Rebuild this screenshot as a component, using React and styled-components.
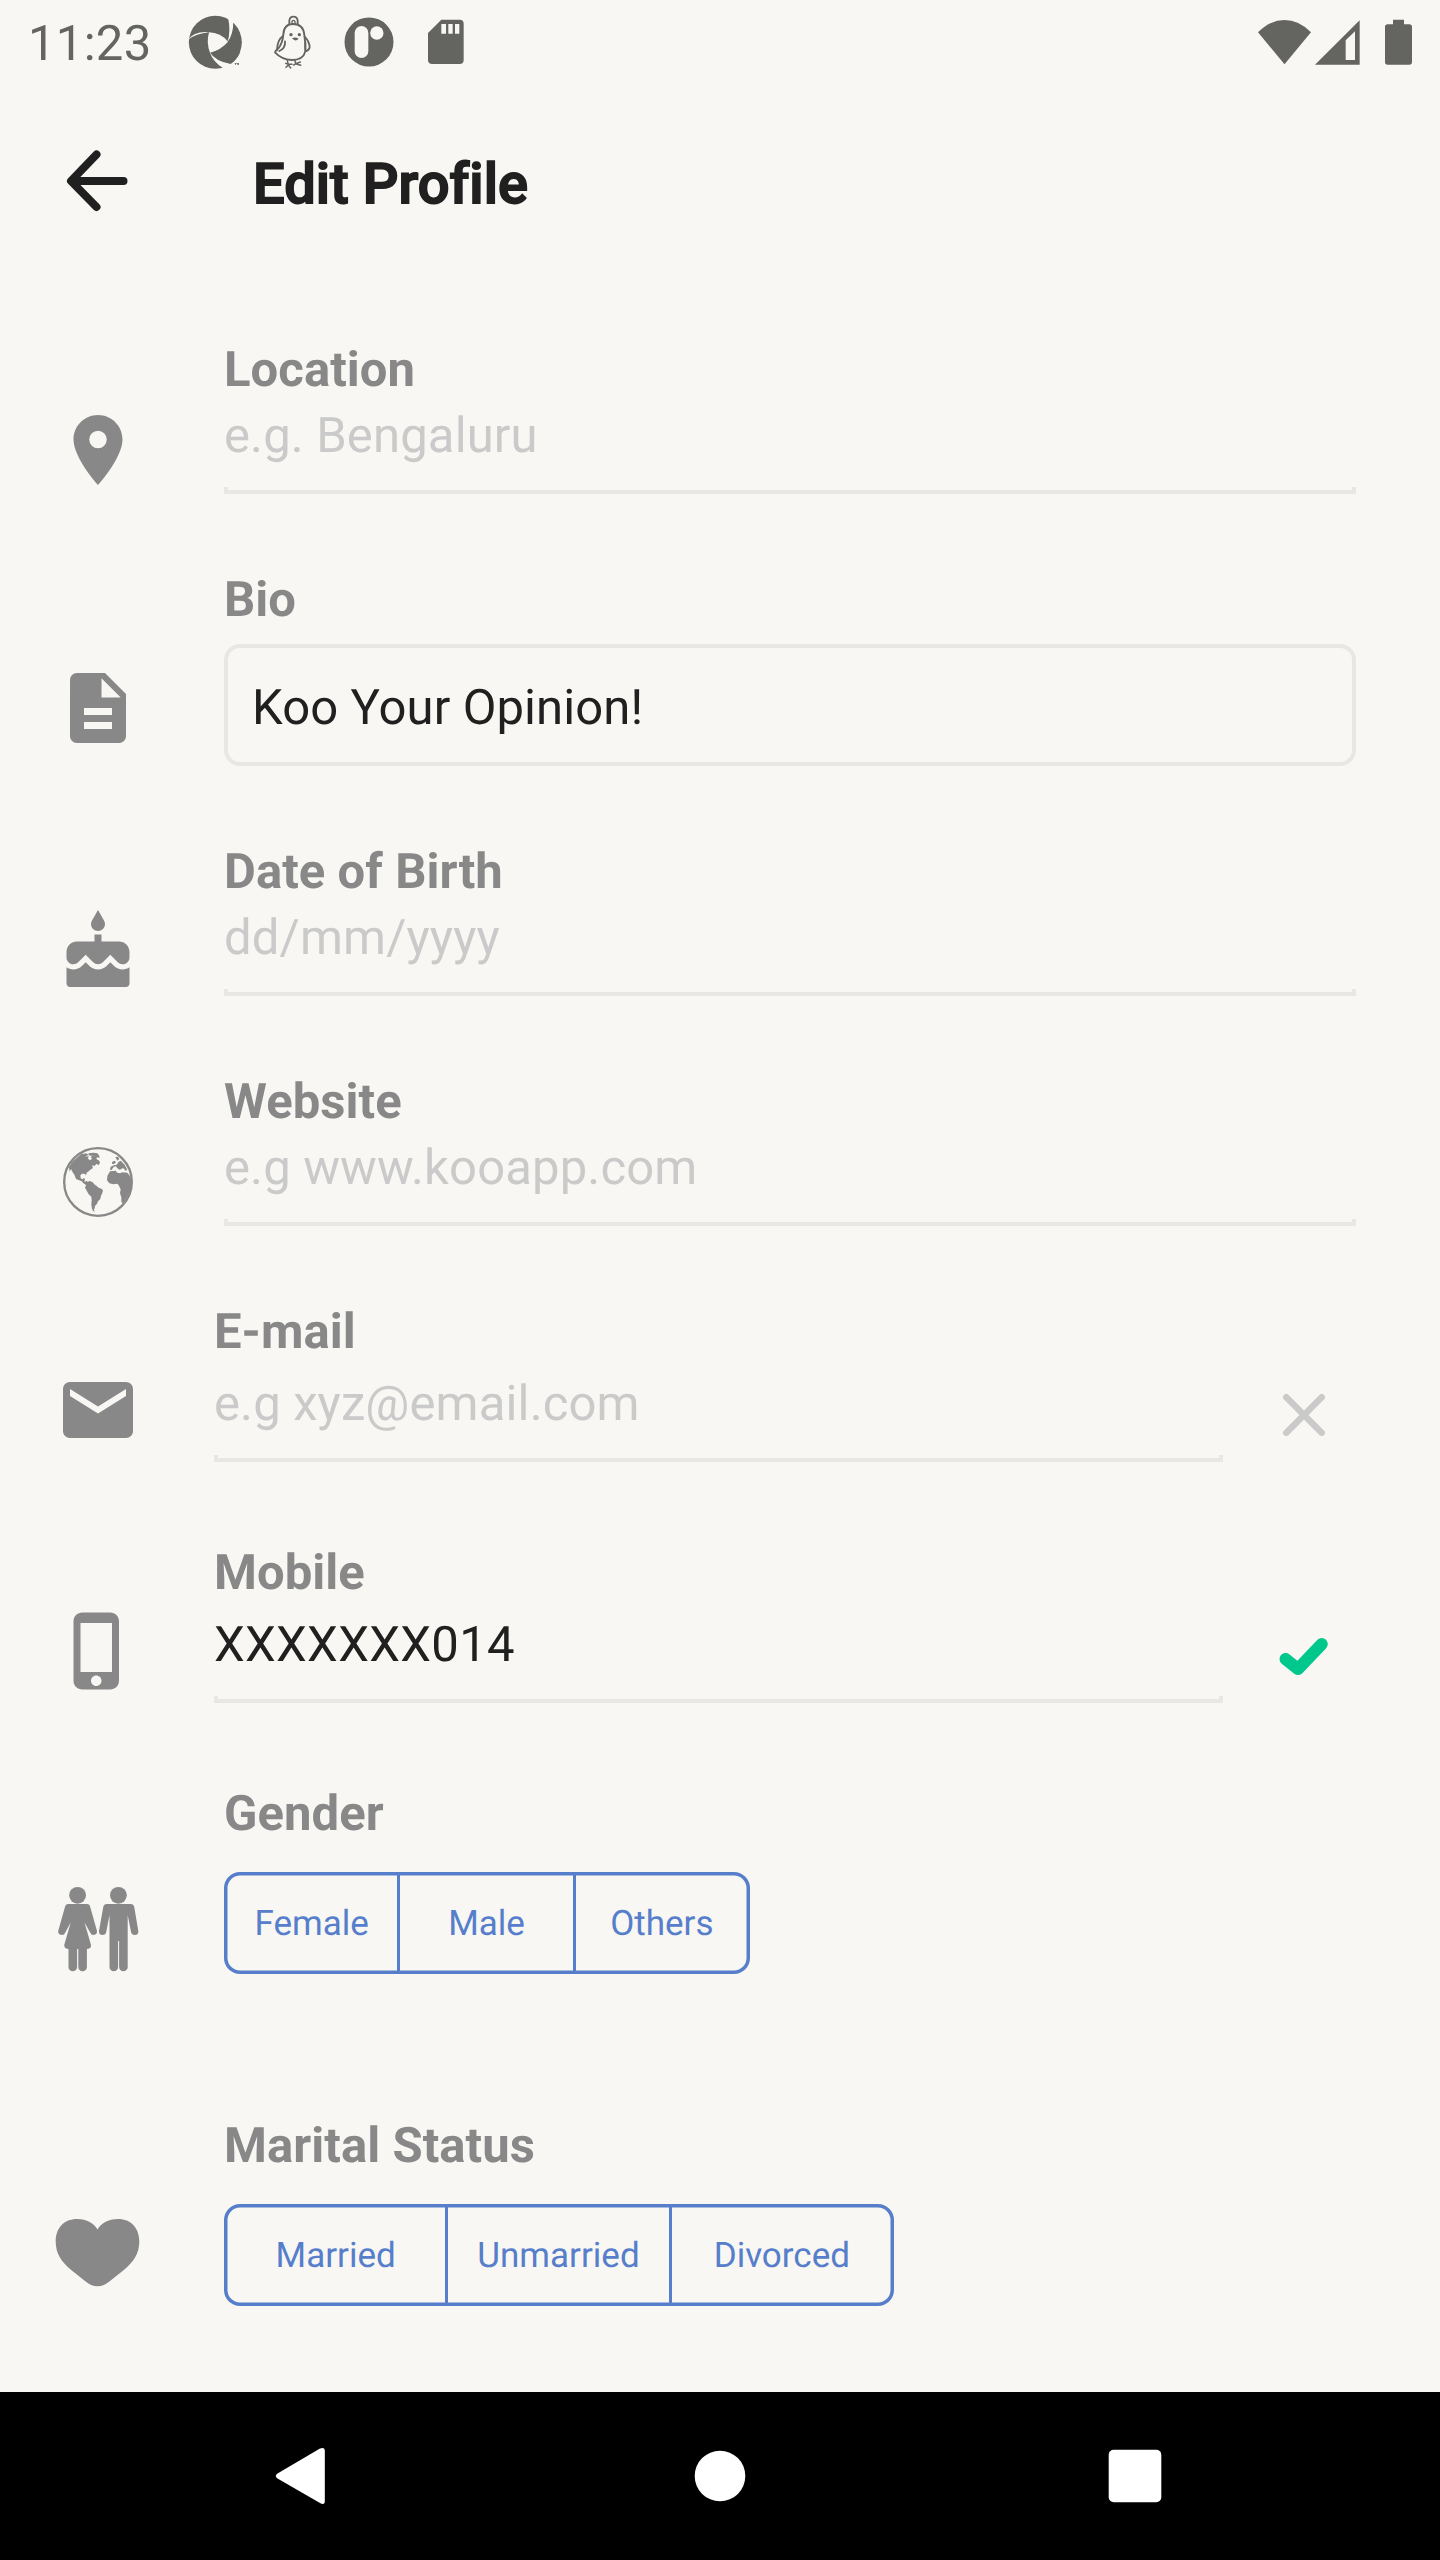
import React from "react";
import styled, { createGlobalStyle } from "styled-components";

const page = "#f8f7f3";
const ink = "#202020";
const muted = "#888888";
const hint = "#cacaca";
const rule = "#e7e8e3";
const blue = "#567ecb";
const statusInk = "#646461";

const GlobalStyle = createGlobalStyle`
  *, *::before, *::after { box-sizing: border-box; }
  html, body { margin: 0; padding: 0; background: ${page}; }
  body {
    font-family: Roboto, "Liberation Sans", sans-serif;
    color: ${ink};
    text-rendering: geometricPrecision;
  }
  svg { display: block; flex: none; overflow: visible; }
`;

const Screen = styled.div`
  width: 1440px;
  height: 2560px;
  display: flex;
  flex-direction: column;
  background: ${page};
  overflow: hidden;
`;

const StatusBar = styled.header`
  height: 84px;
  flex: none;
  display: flex;
  align-items: center;
  padding: 0 28px 0 28px;
  color: ${statusInk};
`;

const Clock = styled.span`
  width: 160px;
  font-size: 49px;
  line-height: 58px;
  letter-spacing: 0.3px;
  padding-top: 4px;
`;

const StatusIcon = styled.svg`
  width: ${(p) => p.$w}px;
  height: ${(p) => p.$h}px;
  margin-left: ${(p) => p.$gap || 0}px;
  fill: currentColor;
`;

const StatusEnd = styled.div`
  margin-left: auto;
  display: flex;
  align-items: center;
`;

const Toolbar = styled.div`
  height: 196px;
  flex: none;
  display: flex;
  align-items: center;
  padding-left: 56px;
`;

const BackButton = styled.button`
  width: 84px;
  height: 84px;
  padding: 0;
  border: 0;
  background: none;
  color: ${ink};
`;

const Title = styled.h1`
  margin: 4px 0 0 113px;
  font-size: 56px;
  line-height: 66px;
  font-weight: 500;
  letter-spacing: 0.05px;
  -webkit-text-stroke: 1.75px ${ink};
`;

const Form = styled.main`
  flex: 1;
  padding-top: 60px;
`;

const Row = styled.section`
  display: flex;
  align-items: flex-start;
  margin-bottom: ${(p) => p.$after}px;
`;

const IconSlot = styled.div`
  width: 84px;
  margin: ${(p) => p.$top}px ${(p) => (p.$tight ? 74 : 84)}px 0 56px;
  color: ${muted};
`;

const Field = styled.div`
  width: ${(p) => p.$width}px;
  display: flex;
  flex-direction: column;
`;

const Label = styled.label`
  padding-top: 1px;
  font-size: 49px;
  line-height: 58px;
  font-weight: 700;
  letter-spacing: 0.06px;
  color: ${muted};
`;

const Value = styled.div`
  margin-top: ${(p) => p.$gap}px;
  font-size: 49px;
  line-height: 58px;
  letter-spacing: ${(p) => (p.$filled ? 0.32 : 0.14)}px;
  color: ${(p) => (p.$filled ? ink : hint)};
`;

const Underline = styled.div`
  margin-top: 22px;
  height: 7px;
  border: 4px solid ${rule};
  border-top: 0;
`;

const BioBox = styled.div`
  margin-top: 15px;
  height: 122px;
  padding: 31px 24px 0;
  border: 4px solid ${rule};
  border-radius: 16px;
  font-size: 49px;
  line-height: 58px;
  letter-spacing: 0.1px;
`;

const Segments = styled.div`
  margin-top: 29px;
  width: ${(p) => p.$width}px;
  height: 102px;
  display: flex;
  border-radius: 16px;
  box-shadow: inset 0 0 0 3.5px ${blue};
`;

const Segment = styled.button`
  flex: 0 0 calc(100% / 3);
  padding: 2px 0 0;
  border: 0;
  background: none;
  color: ${blue};
  font: 400 35px/42px Roboto, "Liberation Sans", sans-serif;
  text-rendering: inherit;

  & + & {
    flex-basis: calc(100% / 3 + 2px);
    margin-left: -2px;
    padding-right: 2px;
    border-left: 3px solid ${blue};
  }
`;

const Mark = styled.div`
  width: 84px;
  margin: ${(p) => p.$top}px 0 0 39px;
`;

const NavBar = styled.nav`
  height: 168px;
  flex: none;
  display: flex;
  justify-content: center;
  align-items: center;
  gap: 331px;
  background: #000;
`;

const Svg24 = ({ children }) => (
  <svg width="84" height="84" viewBox="0 0 24 24" fill="currentColor">{children}</svg>
);

const Svg84 = ({ children }) => (
  <svg width="84" height="84" viewBox="0 0 84 84" fill="currentColor">{children}</svg>
);

const PinIcon = () => (
  <Svg24>
    <path d="M12 2C8.13 2 5 5.13 5 9c0 5.25 7 13 7 13s7-7.75 7-13c0-3.87-3.13-7-7-7zm0 9.5a2.5 2.5 0 0 1 0-5 2.5 2.5 0 0 1 0 5z" />
  </Svg24>
);

const DocIcon = () => (
  <Svg24>
    <path d="M14 2H6c-1.1 0-1.99.9-1.99 2L4 20c0 1.1.89 2 1.99 2H18c1.1 0 2-.9 2-2V8l-6-6zm2 16H8v-2h8v2zm0-4H8v-2h8v2zm-3-5V3.5L18.5 9H13z" />
  </Svg24>
);

const CakeIcon = () => (
  <Svg24>
    <path d="M12 6c1.11 0 2-.9 2-2 0-.38-.1-.73-.29-1.03L12 0l-1.71 2.97c-.19.3-.29.65-.29 1.03 0 1.1.9 2 2 2zm4.6 9.99l-1.07-1.07-1.08 1.07c-1.3 1.3-3.58 1.31-4.89 0l-1.07-1.07-1.09 1.07C6.75 16.64 5.88 17 4.96 17c-.73 0-1.4-.23-1.96-.61V21c0 .55.45 1 1 1h16c.55 0 1-.45 1-1v-4.61c-.56.38-1.23.61-1.96.61-.92 0-1.79-.36-2.44-1.01zM18 9h-5V7h-2v2H6c-1.66 0-3 1.34-3 3v1.54c0 1.08.88 1.96 1.96 1.96.52 0 1.02-.2 1.38-.57l2.14-2.13 2.13 2.13c.74.74 2.03.74 2.77 0l2.14-2.13 2.13 2.13c.37.37.86.57 1.38.57 1.08 0 1.96-.88 1.96-1.96V12C21 10.34 19.66 9 18 9z" />
  </Svg24>
);

const GlobeIcon = () => (
  <svg width="84" height="84" viewBox="0 0 252 252" fill="currentColor">
    <circle cx="126" cy="126" r="101.5" fill="none" stroke="currentColor" strokeWidth="7" />
    <path d="M66 50L74 43 82 40 80 46 86 44 90 50 98 48 96 56 102 61 108 56 104 50 111 47 120 50 122 58 130 62 132 69 127 76 122 71 115 78 108 76 111 84 103 89 98 94 92 98 90 106 86 101 78 101 73 106 74 115 79 118 84 114 87 118 85 124 90 129 92 134 84 131 77 124 68 120 60 117 56 106 50 97 45 87 41 95 39 82 46 70 55 60z" />
    <path d="M76 50L82 42 90 40 98 44 91 48 82 54zM98 40L112 38 124 40 129 46 131 54 124 52 118 56 116 48 106 47 98 46z" />
    <path d="M84 127L91 123 96 125 101 123 109 126 115 133 122 138 128 143 138 147 141 152 138 161 135 167 133 177 126 184 123 191 117 198 116 205 113 209 117 215 111 213 108 206 106 194 107 181 106 170 98 163 91 150 87 143 90 136z" />
    <path d="M168 66L176 62 180 67 174 72 168 71zM178 51L186 50 190 57 184 62zM188 65L194 62 206 74 214 90 208 92 203 85 196 86 192 90 186 86 178 78 170 84 168 90 162 89 164 80 174 76 182 74z" />
    <path d="M162 94L180 92 183 98 193 100 198 97 214 98 222 108 227 120 226 140 221 158 212 175 201 190 196 186 196 172 192 160 194 148 188 136 184 131 172 133 160 130 153 121 154 108z" />
  </svg>
);

const MailIcon = () => (
  <Svg24>
    <path d="M20 4H4c-1.1 0-1.99.9-1.99 2L2 18c0 1.1.9 2 2 2h16c1.1 0 2-.9 2-2V6c0-1.1-.9-2-2-2zm0 4l-8 5-8-5V6l8 5 8-5v2z" />
  </Svg24>
);

const PhoneIcon = () => (
  <Svg24>
    <path d="M15.5 1h-8C6.12 1 5 2.12 5 3.5v17C5 21.88 6.12 23 7.5 23h8c1.38 0 2.5-1.12 2.5-2.5v-17C18 2.12 16.88 1 15.5 1zm-4 21c-.83 0-1.5-.67-1.5-1.5s.67-1.5 1.5-1.5 1.5.67 1.5 1.5-.67 1.5-1.5 1.5zm4.5-4H7V4h9v14z" />
  </Svg24>
);

const PeopleIcon = () => (
  <Svg84>
    <circle cx="21.6" cy="8.3" r="8.4" />
    <path d="M12.5 17h18.2q3 0 3.6 3.2L41 44q.4 3.5-3.4 4-2.6 0-3.4-2.6L28.5 35.5 35 58q.4 4-4.600 4H12.800q-4.600 0-4.600-4l6.500-22.500L9.300 45.400Q8.500 48 5.600 48 1.800 47.500 2.200 44L8.900 20.200Q9.500 17 12.500 17z" />
    <path d="M12.500 60h8.600v20a4.100 4.100 0 0 1-8.600 0zM22.300 60h8.600v20a4.100 4.100 0 0 1-8.600 0z" />
    <circle cx="62.4" cy="8.3" r="8.4" />
    <path d="M51 17h23.500q3.200 0 3.800 3.200L82.300 44q.3 3.800-3.500 4-3.200 0-3.800-3.200L71.700 28v52a4.200 4.200 0 0 1-8.600 0V54h-1v26a4.200 4.200 0 0 1-8.600 0V28l-3.200 16.800Q49.700 48 46.500 48q-3.800-.2-3.500-4L47.200 20.200Q47.800 17 51 17z" />
  </Svg84>
);

const HeartIcon = () => (
  <Svg84>
    <path d="M41.500 19.500C45 13.500 52 9 62 9c13 0 21.300 9 21.300 22.500 0 12-5.800 20.500-15.500 28.500L54 71c-8 7-17 7-25 0L15.200 60C5.500 52-.3 43.500-.3 31.500-.3 18 8 9 21 9c10 0 17 4.500 20.500 10.500z" />
  </Svg84>
);

const TextField = ({ icon, label, value, filled, compact, after, mark }) => (
  <Row $after={after}>
    <IconSlot $top={compact ? 66 : 68} $tight={compact}>{icon}</IconSlot>
    <Field $width={compact ? 1009 : 1132}>
      <Label>{label}</Label>
      <Value $gap={compact ? 14 : 8} $filled={filled}>{value}</Value>
      <Underline />
    </Field>
    {mark}
  </Row>
);

const ChoiceField = ({ icon, iconTop, label, width, options, after }) => (
  <Row $after={after}>
    <IconSlot $top={iconTop}>{icon}</IconSlot>
    <Field $width={1132}>
      <Label>{label}</Label>
      <Segments $width={width}>
        {options.map((o) => <Segment key={o}>{o}</Segment>)}
      </Segments>
    </Field>
  </Row>
);

export default function App() {
  return (
    <Screen>
      <GlobalStyle />
      <StatusBar>
        <Clock>11:23</Clock>
        <StatusIcon $w={55} $h={55} viewBox="564 45 165 165">
          <circle cx="646" cy="127" r="79.5" />
          <g fill={page}>
            <path d="M627 97Q662 98 684 125Q664 149 630 158Q618 128 627 97z" />
            <path d="M562 120Q585 92 628 97Q588 101 562 120zM682 127Q694 95 683 48L700 64Q700 105 682 127zM629 156Q645 184 695 193L672 206Q640 188 629 156z" />
            <path d="M690 194l36 -14v30h-60z" />
          </g>
          <path d="M690 193Q712 178 721 155L700 178zM704 189h6v2h-2v4h-2v-4h-2zM711 189h2l1 3 1-3h2v6h-2v-3l-1 2-2-2v3h-1z" />
        </StatusIcon>
        <StatusIcon $w={38.33} $h={55} $gap={30.3} viewBox="820 45 115 165">
          <g fill="none" stroke="currentColor" strokeWidth="5.5" strokeLinecap="round" strokeLinejoin="round">
            <path d="M869 72V61Q871 50 881 50Q892 50 894 61V73" />
            <path d="M877 71V64Q881 58 886 64V72" strokeWidth="4" />
            <path d="M851 104Q852 72 881 72Q911 72 914 105Q918 130 917 154Q911 180 876 180Q845 178 826 157Q828 151 837 144Q849 128 851 104z" />
            <path d="M849 109Q833 120 832 151M856 124Q858 144 839 153M915 110Q930 126 930 143Q926 153 917 154M917 127V147" />
            <path d="M863 181L866 196M858 190L866 193L877 193M866 195L859 202M867 196L873 204M885 180L889 192M882 195L889 191L902 186M890 192L903 196" strokeWidth="4.5" />
          </g>
          <circle cx="874" cy="104" r="5" />
          <circle cx="899" cy="104" r="5" />
          <path d="M877 115Q887 109 897 116Q887 127 877 115z" />
        </StatusIcon>
        <StatusIcon $w={50} $h={50} $gap={32.6} viewBox="1033 52 150 150">
          <circle cx="1108" cy="127" r="73.5" />
          <rect x="1065" y="79" width="41" height="96" rx="20.5" fill={page} />
          <circle cx="1131.5" cy="100" r="20" fill={page} />
        </StatusIcon>
        <StatusIcon $w={38} $h={46} $gap={33} viewBox="1282 58 114 138">
          <path d="M1325 60h55q12 0 12 12v109q0 12-12 12h-82q-13 0-13-12v-81zM1325 73v29h14V73zM1346 73v29h13V73zM1366 73v29h13V73z" fillRule="evenodd" />
        </StatusIcon>
        <StatusEnd>
          <StatusIcon $w={53} $h={45} viewBox="174 57 159 135">
            <path d="M174 94Q210 57 253.500 57Q297 57 333 94L253.500 190z" />
          </StatusIcon>
          <StatusIcon $w={45} $h={45} $gap={4.3} viewBox="346 57 135 135">
            <path d="M346 191L480 58V191zM438 118V177H466V91z" fillRule="evenodd" />
          </StatusIcon>
          <StatusIcon $w={27} $h={46} $gap={24.7} viewBox="555 56 81 138">
            <path d="M579 58h33v14h16q8 0 8 8v105q0 8-8 8h-65q-8 0-8-8V80q0-8 8-8h16z" />
          </StatusIcon>
        </StatusEnd>
      </StatusBar>

      <Toolbar>
        <BackButton aria-label="Back">
          <svg width="84" height="84" viewBox="55.5 140 84 84" fill="none" stroke="currentColor" strokeWidth="8" strokeLinecap="round" strokeLinejoin="round">
            <path d="M96 154.500L70.500 181L96 207M71 181H123" />
          </svg>
        </BackButton>
        <Title>Edit Profile</Title>
      </Toolbar>

      <Form>
        <TextField icon={<PinIcon />} label="Location" value="e.g. Bengaluru" after={76} />
        <Row $after={76}>
          <IconSlot $top={96}><DocIcon /></IconSlot>
          <Field $width={1132}>
            <Label>Bio</Label>
            <BioBox>Koo Your Opinion!</BioBox>
          </Field>
        </Row>
        <TextField icon={<CakeIcon />} label="Date of Birth" value="dd/mm/yyyy" after={76} />
        <TextField icon={<GlobeIcon />} label="Website" value="e.g www.kooapp.com" after={76} />
        <TextField
          icon={<MailIcon />}
          label="E-mail"
          value="e.g xyz@email.com"
          compact
          after={81}
          mark={
            <Mark $top={70.5}>
              <svg width="84" height="84" viewBox="-42 -42 84 84" fill="none" stroke={hint} strokeWidth="6.5" strokeLinecap="round">
                <path d="M-17.700 -17.700L17.700 17.700M17.700 -17.700L-17.700 17.700" />
              </svg>
            </Mark>
          }
        />
        <TextField
          icon={<PhoneIcon />}
          label="Mobile"
          value="XXXXXXX014"
          filled
          compact
          after={81}
          mark={
            <Mark $top={70}>
              <svg width="84" height="84" viewBox="1262 1613 84 84" fill="none" stroke="#00c88c" strokeWidth="12" strokeLinecap="round" strokeLinejoin="round">
                <path d="M1285.500 1659L1298 1669L1321.800 1644" />
              </svg>
            </Mark>
          }
        />
        <ChoiceField icon={<PeopleIcon />} iconTop={103} label="Gender" width={526} options={["Female", "Male", "Others"]} after={142} />
        <ChoiceField icon={<HeartIcon />} iconTop={94} label="Marital Status" width={670} options={["Married", "Unmarried", "Divorced"]} after={0} />
      </Form>

      <NavBar>
        <svg width="84" height="84" viewBox="263 2434 84 84" fill="#fff">
          <path d="M277.500 2473.500L320 2448.500Q324.800 2446.500 324.800 2451V2501Q324.800 2505.500 320 2503L277.500 2478.500Q274 2476 277.500 2473.500z" />
        </svg>
        <svg width="84" height="84" viewBox="-42 -42 84 84" fill="#fff"><circle r="25.3" /></svg>
        <svg width="84" height="84" viewBox="-42 -42 84 84" fill="#fff"><rect x="-26.3" y="-26.3" width="52.6" height="52.6" rx="5" /></svg>
      </NavBar>
    </Screen>
  );
}
